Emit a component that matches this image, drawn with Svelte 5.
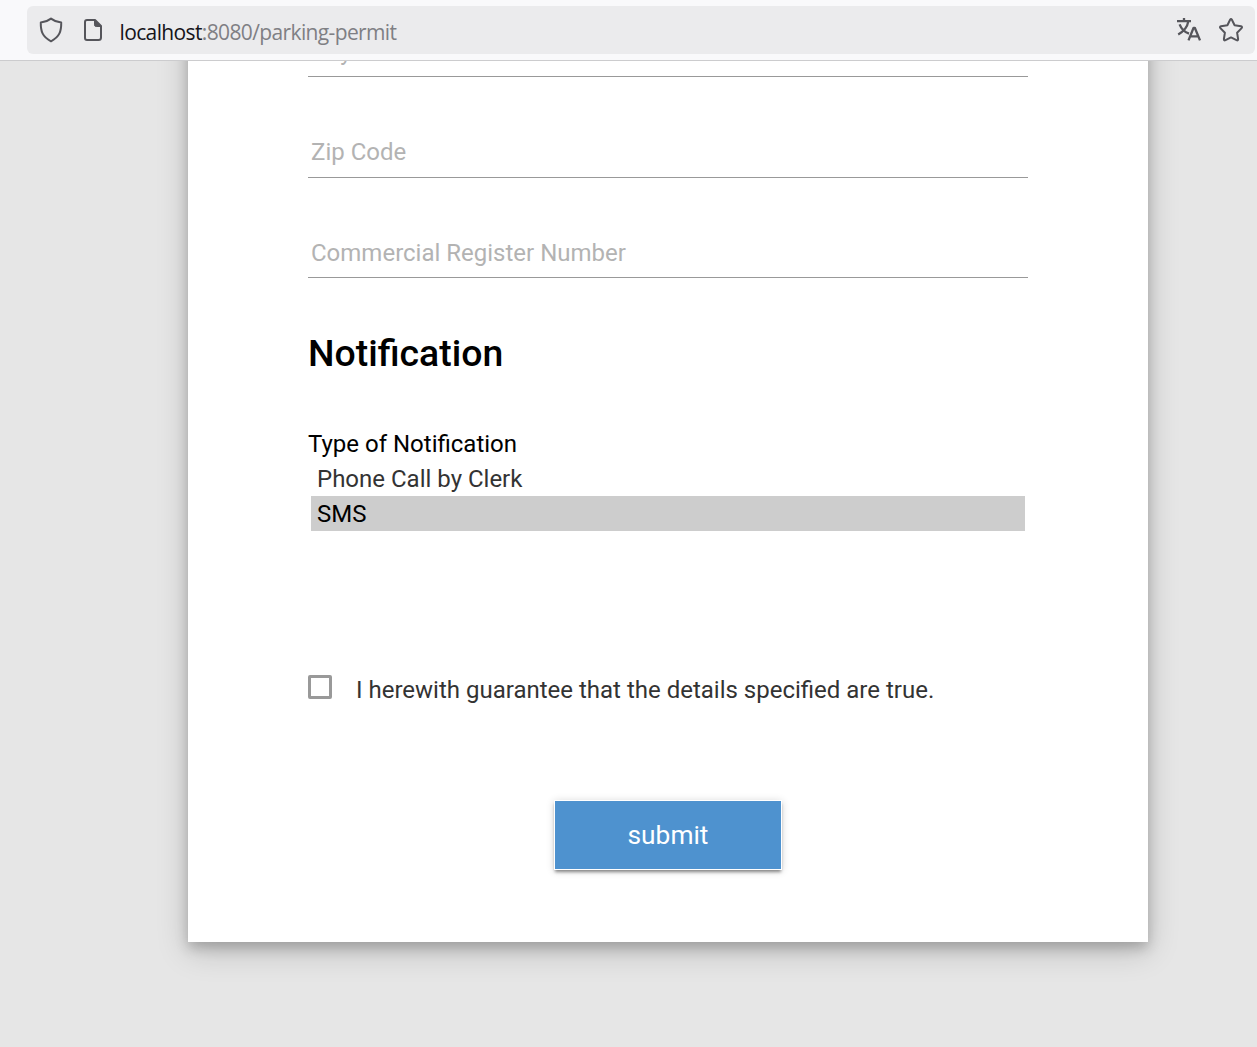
<script>
  const fields = ['City', 'Zip Code', 'Commercial Register Number'];
  const options = ['Phone Call by Clerk', 'SMS'];
  let selected = $state('SMS');
</script>

<div class="window">
  <header class="toolbar">
    <div class="address">
      <svg class="shield" width="24" height="26" viewBox="0 0 24 26">
        <path d="M12 1.6 C9 3.9 5.6 5.2 1.8 5.6 C1.6 14 3.3 19.8 12 24.3 C20.7 19.8 22.4 14 22.2 5.6 C18.4 5.2 15 3.9 12 1.6 Z" />
      </svg>
      <svg class="page-icon" width="20" height="24" viewBox="0 0 20 24">
        <path d="M4 2 H12 L18 8 V19.5 Q18 22 15.5 22 H4 Q2 22 2 20 V4 Q2 2 4 2 Z" />
        <path class="solid" d="M11.5 2 V6.8 Q11.5 8.5 13.2 8.5 H18 V8 L12 2 Z" />
      </svg>
      <span class="url"><span class="host">localhost</span>:8080/parking-permit</span>
      <svg class="translate" width="26" height="26" viewBox="0 0 26 26">
        <path d="M1 4.2 H15 M8 1 V4.2 M12.3 4.4 C11.5 9.5 7.5 14.5 2.2 17.4 M3.6 7.4 C5.2 11.6 8.8 15.2 13 16.6" />
        <path d="M12.5 23.4 L17.6 10.8 H18.8 L24 23.4 M14.2 19.4 H22.3" />
      </svg>
      <svg class="star" width="26" height="26" viewBox="0 0 26 26">
        <path d="M12.1 2.8 Q13 1.2 13.9 2.8 L16.6 8.3 L23 9.3 Q24.7 9.8 23.6 11.1 L19.1 15.7 L20.1 22 Q20.2 23.9 18.5 23.2 L13 20.4 L7.5 23.2 Q5.8 23.9 5.9 22 L6.9 15.7 L2.4 11.1 Q1.3 9.8 3 9.3 L9.4 8.3 Z" />
      </svg>
    </div>
  </header>

  <main>
    <form class="card" onsubmit={(e) => e.preventDefault()}>
      {#each fields as field}
        <div class="field"><span>{field}</span></div>
      {/each}

      <h2>Notification</h2>
      <div class="label">Type of Notification</div>
      <div class="listbox">
        {#each options as option}
          <div class="option" class:selected={option === selected}>{option}</div>
        {/each}
      </div>

      <div class="confirm">
        <span class="box"></span>
        <span>I herewith guarantee that the details specified are true.</span>
      </div>

      <button type="submit">submit</button>
    </form>
  </main>
</div>

<style>
  .window {
    width: 1257px;
    height: 1047px;
    display: flex;
    flex-direction: column;
    overflow: hidden;
    font-family: Roboto, sans-serif;
    font-size: 24px;
    color: #333;
  }
  .toolbar {
    flex: none;
    box-sizing: border-box;
    height: 61px;
    padding: 6px 2px 6px 27px;
    background: #f9f9fb;
    border-bottom: 1px solid #ccccce;
  }
  .address {
    box-sizing: border-box;
    height: 48px;
    padding: 0 11px 0 12px;
    display: flex;
    align-items: center;
    border-radius: 6px;
    background: #ebebed;
  }
  svg {
    flex: none;
    fill: none;
    stroke: #55555b;
    stroke-width: 2;
    stroke-linejoin: round;
  }
  .solid {
    fill: #55555b;
    stroke-width: 1;
  }
  .translate {
    stroke-width: 2.3;
  }
  .page-icon {
    margin-left: 20px;
  }
  .url {
    flex: 1;
    margin-left: 16.5px;
    padding-top: 4px;
    font-family: "Open Sans", sans-serif;
    font-size: 21px;
    letter-spacing: -0.63px;
    color: #7f7f84;
    white-space: nowrap;
  }
  .host {
    color: #15141a;
  }
  .star {
    margin-left: 16px;
  }
  main {
    flex: 1;
    overflow: hidden;
    background: #e6e6e6;
  }
  .card {
    box-sizing: border-box;
    width: 960px;
    height: 965.3px;
    margin: -84.3px 0 0 188px;
    padding: 0 120px;
    background: #fff;
    box-shadow: 0 6px 12px rgba(0, 0, 0, 0.2), 0 9px 30px rgba(0, 0, 0, 0.19);
  }
  .field {
    box-sizing: border-box;
    height: 100.5px;
    padding: 0 3px 10.5px;
    display: flex;
    align-items: flex-end;
    line-height: 28px;
    border-bottom: 1px solid #999;
    color: #b3b3b3;
  }
  h2 {
    margin: 53px 0 0;
    font-size: 37.4px;
    line-height: 44px;
    font-weight: 500;
    color: #000;
  }
  .label {
    margin-top: 51px;
    padding-top: 1px;
    line-height: 34px;
    color: #000;
  }
  .listbox {
    height: 140px;
    padding: 0 3px;
  }
  .option {
    padding: 1px 6px 0;
    line-height: 34px;
  }
  .selected {
    background: #cdcdcd;
    color: #000;
  }
  .confirm {
    margin-top: 73.3px;
    height: 30px;
    display: flex;
    gap: 24px;
    line-height: 30px;
  }
  .box {
    box-sizing: border-box;
    width: 24px;
    height: 24px;
    border: 3px solid #999;
    border-radius: 2px;
  }
  button {
    display: block;
    box-sizing: border-box;
    width: 228px;
    height: 70px;
    margin: 95px auto 0;
    padding: 0;
    border: 1px solid #fff;
    background: #4e92cf;
    box-shadow: 0 3px 3px -1px rgba(0, 0, 0, 0.42), 0 1px 8px rgba(0, 0, 0, 0.16);
    color: #fff;
    font: 26.3px Roboto, sans-serif;
  }
</style>
